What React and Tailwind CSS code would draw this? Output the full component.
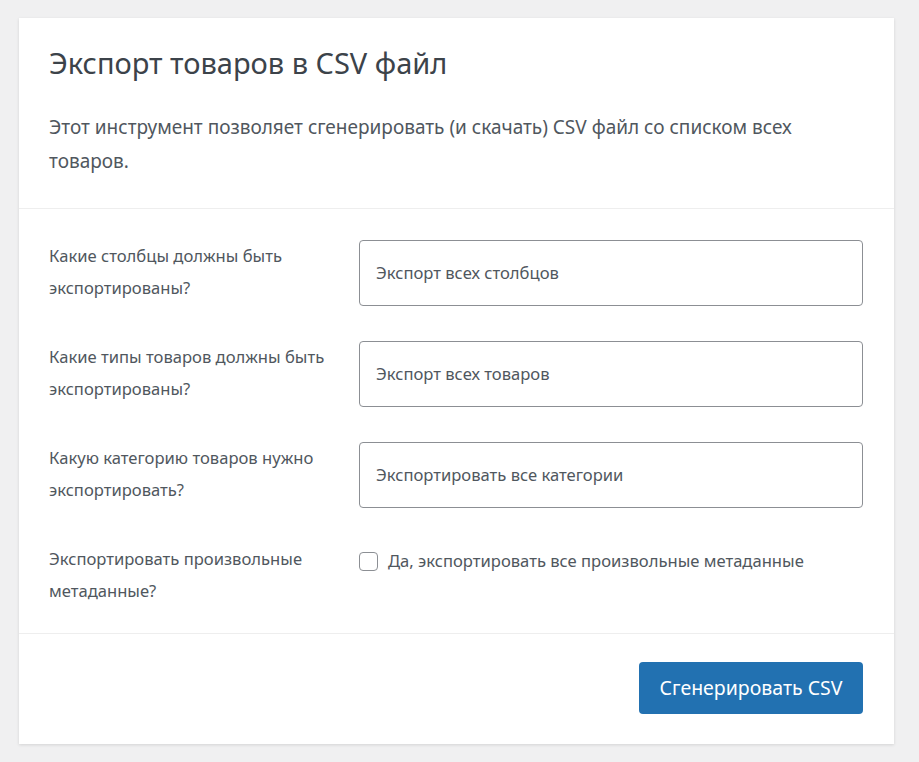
import React from "react";

const rows = [
    { label: ["Какие столбцы должны быть", "экспортированы?"], value: "Экспорт всех столбцов" },
    { label: ["Какие типы товаров должны быть", "экспортированы?"], value: "Экспорт всех товаров" },
    { label: ["Какую категорию товаров нужно", "экспортировать?"], value: "Экспортировать все категории" },
];

const App = () => {
    return (
        <div className="min-h-screen w-full bg-[#f0f0f1] pt-[18px] pl-[19px] font-['Noto_Sans','Open_Sans',sans-serif] text-[#50575e]">
            <div className="w-[875px] bg-white shadow-[0_1px_3px_rgba(0,0,0,0.12)]">
                {/* шапка */}
                <div className="px-[30px] pt-[29px] pb-[30px] border-b border-[#eeeeee]">
                    <h2 className="text-[29px] leading-[32px] text-[#3c434a]">Экспорт товаров в CSV файл</h2>
                    <p className="mt-[31px] text-[19px] leading-[34px] max-w-[790px]">
                        Этот инструмент позволяет сгенерировать (и скачать) CSV файл со списком всех товаров.
                    </p>
                </div>

                {/* поля */}
                <div className="px-[30px] pt-[31px] pb-[26px] border-b border-[#eeeeee] flex flex-col gap-[35px]">
                    {rows.map((row) => (
                        <div key={row.value} className="flex">
                            <div className="w-[310px] text-[16.6px] leading-[32px]">
                                {row.label[0]}
                                <br />
                                {row.label[1]}
                            </div>
                            <div className="w-[504px] h-[66px] border border-[#8c8f94] rounded-[4px] flex items-center px-4 text-[16.6px] text-[#50575e]">
                                {row.value}
                            </div>
                        </div>
                    ))}
                    <div className="flex">
                        <div className="w-[310px] text-[16.6px] leading-[32px]">
                            Экспортировать произвольные
                            <br />
                            метаданные?
                        </div>
                        <div className="h-[36px] flex items-center gap-[10px] text-[16.6px]">
                            <span className="w-[19px] h-[19px] border border-[#8c8f94] rounded-[4px] bg-white"></span>
                            Да, экспортировать все произвольные метаданные
                        </div>
                    </div>
                </div>

                {/* кнопка */}
                <div className="flex justify-end pt-[28px] pb-[30px] pr-[31px]">
                    <button className="w-[224px] h-[52px] rounded-[4px] bg-[#2271b1] text-white text-[19.5px]">
                        Сгенерировать CSV
                    </button>
                </div>
            </div>
        </div>
    );
};

export default App;
